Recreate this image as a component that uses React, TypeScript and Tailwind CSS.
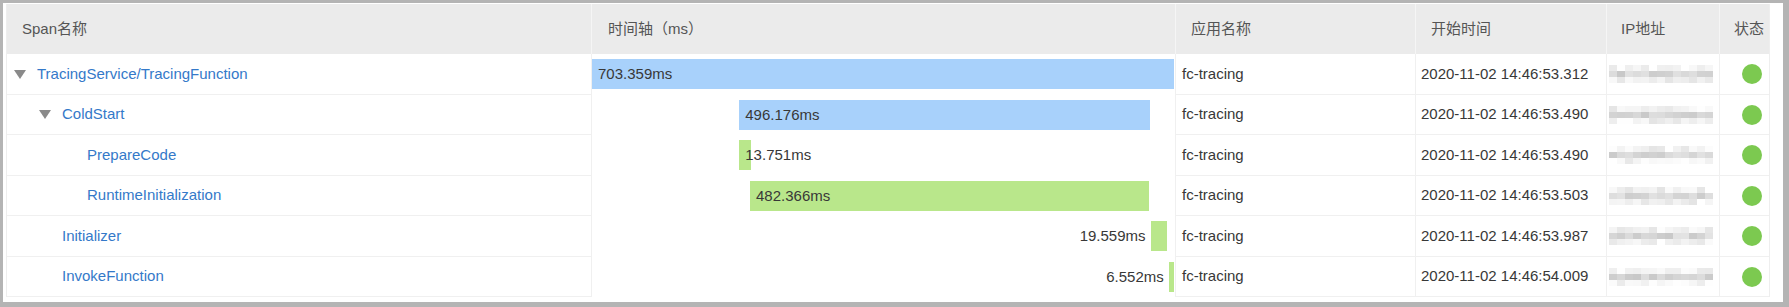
import React from 'react';

const K = 582 / 703.359;

type Span = {
  name: string;
  level: number;
  expandable: boolean;
  start: number;
  dur: number;
  kind: 'blue' | 'green';
  labelLeft?: boolean;
  time: string;
};

const spans: Span[] = [
  { name: 'TracingService/TracingFunction', level: 0, expandable: true, start: 0, dur: 703.359, kind: 'blue', time: '2020-11-02 14:46:53.312' },
  { name: 'ColdStart', level: 1, expandable: true, start: 178, dur: 496.176, kind: 'blue', time: '2020-11-02 14:46:53.490' },
  { name: 'PrepareCode', level: 2, expandable: false, start: 178, dur: 13.751, kind: 'green', time: '2020-11-02 14:46:53.490' },
  { name: 'RuntimeInitialization', level: 2, expandable: false, start: 191, dur: 482.366, kind: 'green', time: '2020-11-02 14:46:53.503' },
  { name: 'Initializer', level: 1, expandable: false, start: 675, dur: 19.559, kind: 'green', labelLeft: true, time: '2020-11-02 14:46:53.987' },
  { name: 'InvokeFunction', level: 1, expandable: false, start: 697, dur: 6.552, kind: 'green', labelLeft: true, time: '2020-11-02 14:46:54.009' },
];

const levelPad = ['pl-[7px]', 'pl-[32px]', 'pl-[57px]'];

// pixelated IP address, shades picked from a seed
const Mosaic = ({ seed }: { seed: number }) => {
  let s = seed * 9301 + 49297;
  const rnd = () => {
    s = (s * 9301 + 49297) % 233280;
    return s / 233280;
  };
  const rows = [0, 1, 2];
  const cols = Array.from({ length: 13 }, (_, i) => i);
  return (
    <div className="flex flex-col">
      {rows.map((r) => (
        <div key={r} className="flex">
          {cols.map((c) => {
            const base = r === 1 ? 200 : 228;
            const v = Math.round(base + rnd() * 28);
            return <div key={c} className="w-[8px] h-[6px]" style={{ backgroundColor: `rgb(${v},${v},${v})` }} />;
          })}
        </div>
      ))}
    </div>
  );
};

const Triangle = () => (
  <svg width="12" height="9" viewBox="0 0 12 9" className="shrink-0 mr-[11px]">
    <path d="M0 0 L12 0 L6 9 Z" fill="#8a8a8a" />
  </svg>
);

export default function App() {
  return (
    <div className="w-[1789px] h-[307px] bg-white border-[#b4b4b4] border-t-[3px] border-l-[3px] border-r-[6px] border-b-[5px] pt-[1px] pl-[3px] font-['Liberation_Sans','Noto_Sans_CJK_SC',sans-serif] text-[15px]">
      <div className="w-[1764px] border-x border-[#eeeeee]">
        {/* header */}
        <div className="flex h-[50px] bg-[#ebebeb] text-[#555555]">
          <div className="w-[585px] border-r border-[#f5f5f5] flex items-center pl-[15px]">Span名称</div>
          <div className="w-[584px] border-r border-[#f5f5f5] flex items-center pl-[16px]">时间轴（ms）</div>
          <div className="w-[240px] border-r border-[#f5f5f5] flex items-center pl-[15px]">应用名称</div>
          <div className="w-[191px] border-r border-[#f5f5f5] flex items-center pl-[15px]">开始时间</div>
          <div className="w-[113px] border-r border-[#f5f5f5] flex items-center pl-[14px]">IP地址</div>
          <div className="w-[49px] flex items-center pl-[14px]">状态</div>
        </div>

        {/* rows */}
        {spans.map((sp, i) => {
          const left = sp.start * K;
          const width = Math.max(sp.dur * K, 3);
          return (
            <div key={sp.name} className={`flex text-[#383838] ${i % 2 === 0 ? 'h-[41px]' : 'h-[40px]'}`}>
              <div className={`w-[585px] border-r border-b border-[#f0f0f0] flex items-center ${levelPad[sp.level]}`}>
                {sp.expandable ? <Triangle /> : <div className="w-[23px] shrink-0" />}
                <span className="text-[#3479c9] whitespace-nowrap">{sp.name}</span>
              </div>
              <div className="w-[584px] border-r border-[#f0f0f0] relative">
                <div
                  className={`absolute top-[5px] h-[30px] ${sp.kind === 'blue' ? 'bg-[#a8d1fb]' : 'bg-[#b9e78b]'}`}
                  style={{ left, width }}
                />
                {sp.labelLeft ? (
                  <div className="absolute top-[5px] h-[30px] flex items-center whitespace-nowrap" style={{ right: 583 - left + 5 }}>
                    {sp.dur}ms
                  </div>
                ) : (
                  <div className="absolute top-[5px] h-[30px] flex items-center whitespace-nowrap" style={{ left: left + 6 }}>
                    {sp.dur}ms
                  </div>
                )}
              </div>
              <div className="w-[240px] border-r border-b border-[#f0f0f0] flex items-center pl-[6px]">fc-tracing</div>
              <div className="w-[191px] border-r border-b border-[#f0f0f0] flex items-center pl-[5px] whitespace-nowrap">{sp.time}</div>
              <div className="w-[113px] border-r border-b border-[#f0f0f0] flex items-center pl-[2px]">
                <Mosaic seed={i + 3} />
              </div>
              <div className="w-[49px] border-b border-[#f0f0f0] flex items-center pl-[22px]">
                <div className="w-[20px] h-[20px] rounded-full bg-[#7cc950]" />
              </div>
            </div>
          );
        })}
      </div>
    </div>
  );
}
